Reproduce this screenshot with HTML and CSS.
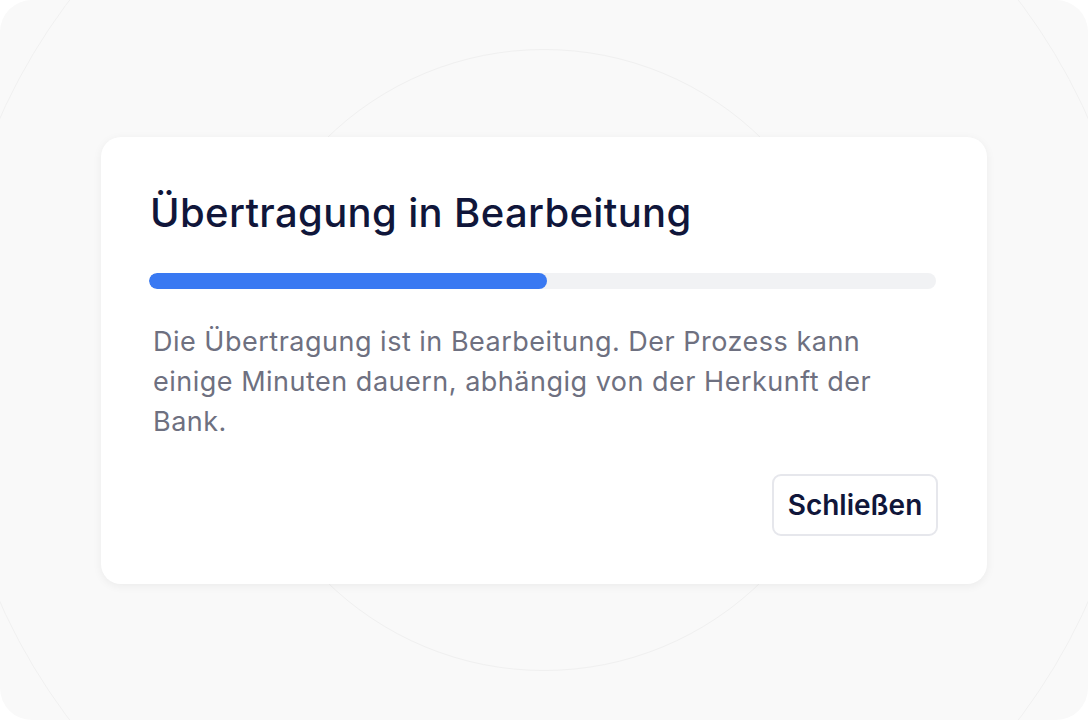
FILE: index.html
```html
<!DOCTYPE html>
<html lang="de">
<head>
<meta charset="utf-8">
<title>Übertragung in Bearbeitung</title>
<link rel="stylesheet" href="styles.css">
</head>
<body>
<div class="stage">
  <div class="ring ring-outer"></div>
  <div class="ring ring-inner"></div>
  <div class="card">
    <h1 class="title">Übertragung in Bearbeitung</h1>
    <div class="track"><div class="fill" style="width:50.6%"></div></div>
    <p class="desc">Die Übertragung ist in Bearbeitung. Der Prozess kann einige Minuten dauern, abhängig von der Herkunft der Bank.</p>
    <div class="actions">
      <button class="btn">Schließen</button>
    </div>
  </div>
</div>
</body>
</html>
```
FILE: styles.css
```css
html, body {
  margin: 0;
  padding: 0;
  background: #ffffff;
}
body {
  font-family: Inter, "Noto Sans", sans-serif;
}
.stage {
  position: relative;
  width: 1088px;
  height: 720px;
  background: #f9f9f9;
  border-radius: 32px;
  overflow: hidden;
  display: flex;
  align-items: center;
  justify-content: center;
}
.ring {
  position: absolute;
  border-radius: 50%;
  border: 1.5px solid #f0f0f0;
  left: 50%;
  top: 50%;
  transform: translate(-50%, -50%);
}
.ring-outer {
  width: 1190px;
  height: 1190px;
}
.ring-inner {
  width: 620px;
  height: 620px;
}
.card {
  position: relative;
  width: 886px;
  box-sizing: border-box;
  background: #ffffff;
  border-radius: 20px;
  box-shadow: 0 2px 10px rgba(0, 0, 0, 0.06);
  padding: 52px 49px 48px 48px;
}
.title {
  margin: 0 0 0 1px;
  font-size: 40px;
  line-height: 48px;
  font-weight: 500;
  color: #10163a;
  letter-spacing: 0.35px;
}
.track {
  margin-top: 36px;
  height: 16px;
  width: 787px;
  background: #f1f2f4;
  border-radius: 8px;
  overflow: hidden;
}
.fill {
  height: 100%;
  background: #3979f2;
  border-radius: 8px;
}
.desc {
  margin: 33px 0 0 4px;
  font-size: 27px;
  line-height: 40px;
  color: #6e7080;
  letter-spacing: 0.5px;
  max-width: 770px;
}
.actions {
  margin-top: 32px;
  display: flex;
  justify-content: flex-end;
}
.btn {
  font-family: Inter, "Noto Sans", sans-serif;
  width: 166px;
  height: 62px;
  padding: 0;
  background: #ffffff;
  border: 2px solid #e6e7ec;
  border-radius: 9px;
  font-size: 28px;
  font-weight: 600;
  color: #10163a;
  margin-right: 0;
}
```
